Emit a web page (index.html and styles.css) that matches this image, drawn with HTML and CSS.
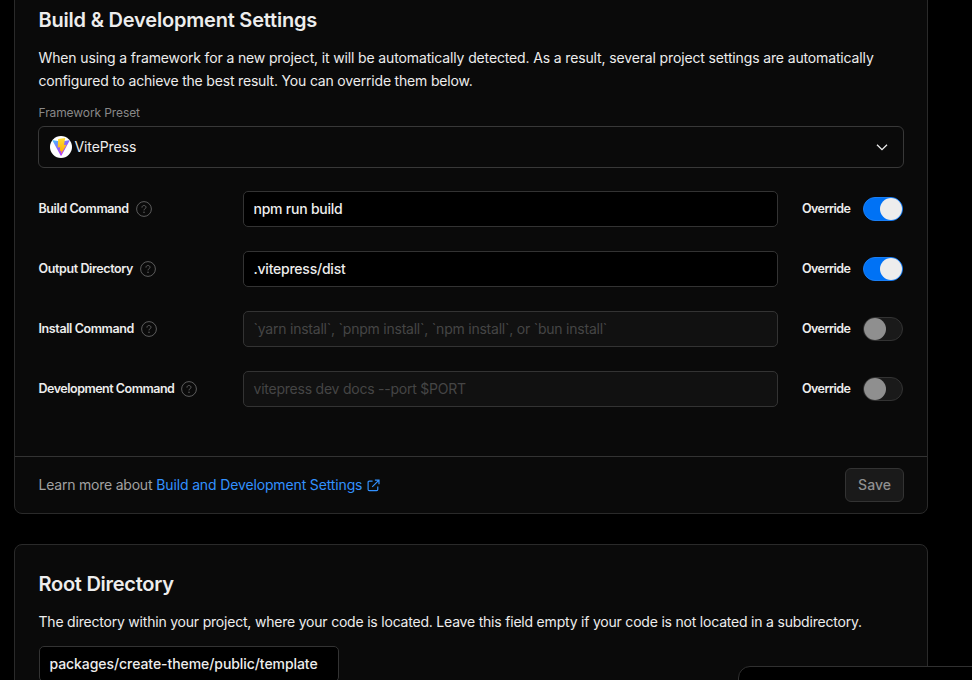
FILE: index.html
```html
<!DOCTYPE html>
<html lang="en">
<head>
<meta charset="utf-8">
<title>Project Settings</title>
<link rel="stylesheet" href="styles.css">
</head>
<body>
<svg class="defs" width="0" height="0" aria-hidden="true">
  <symbol id="help" viewBox="0 0 16 16">
    <circle cx="8" cy="8" r="7.4" fill="none" stroke="currentColor"/>
    <path d="M6 6.7V6.3C6 5.2 6.9 4.5 8 4.5s2 .8 2 1.8c0 .7-.4 1.1-1 1.5-.7.4-1 .8-1 1.4v.2" fill="none" stroke="currentColor"/>
    <circle cx="8" cy="11.3" r=".8" fill="currentColor"/>
  </symbol>
</svg>
<main class="page">
  <section class="card build">
    <div class="body">
      <h2 class="t-build">Build &amp; Development Settings</h2>
      <p class="desc"><span class="d1">When using a framework for a new project, it will be automatically detected. As a result, several project settings are automatically</span><br><span class="d2">configured to achieve the best result. You can override them below.</span></p>
      <div class="caption">Framework Preset</div>
      <div class="select">
        <svg class="logo" width="22" height="22" viewBox="0 0 22 22">
          <defs>
            <linearGradient id="v" x1="0" y1="0" x2=".6" y2="1"><stop offset="0" stop-color="#41c8ff"/><stop offset=".55" stop-color="#8d5cff"/><stop offset="1" stop-color="#bd34fe"/></linearGradient>
            <linearGradient id="b" x1="0" y1="0" x2="0" y2="1"><stop offset="0" stop-color="#ffdd35"/><stop offset="1" stop-color="#ffa800"/></linearGradient>
          </defs>
          <circle cx="11" cy="11" r="11" fill="#fff"/>
          <path d="M3.1 4.2 11 5.4l8-1.2q.8 0 .4.7L11.5 19.4q-.5.6-.9 0L2.7 4.9q-.4-.8.4-.7Z" fill="url(#v)"/>
          <path d="m15.2 2-7 1-.5 8.6 2.5-.4-.6 4 1.8-.5-.4 3.4 5.6-9.4-2.6.4 1.2-7.1Z" fill="url(#b)"/>
        </svg>
        <span class="preset">VitePress</span>
        <svg class="chevron" width="16" height="16" viewBox="0 0 16 16"><path d="m3 5.7 5 5 5-5" fill="none" stroke="#ededed" stroke-width="1.3"/></svg>
      </div>
      <div class="rows">
        <div class="row"><div class="label"><span class="l1">Build Command</span><svg class="help"><use href="#help"/></svg></div><div class="field"><span class="f1">npm run build</span></div><span class="override">Override</span><span class="switch on"></span></div>
        <div class="row"><div class="label"><span class="l2">Output Directory</span><svg class="help"><use href="#help"/></svg></div><div class="field"><span class="f2">.vitepress/dist</span></div><span class="override">Override</span><span class="switch on"></span></div>
        <div class="row"><div class="label"><span class="l3">Install Command</span><svg class="help"><use href="#help"/></svg></div><div class="field off"><span class="f3">`yarn install`, `pnpm install`, `npm install`, or `bun install`</span></div><span class="override">Override</span><span class="switch"></span></div>
        <div class="row"><div class="label"><span class="l4">Development Command</span><svg class="help"><use href="#help"/></svg></div><div class="field off"><span class="f4">vitepress dev docs --port $PORT</span></div><span class="override">Override</span><span class="switch"></span></div>
      </div>
    </div>
    <footer class="footer">
      <div class="learn"><span class="n1">Learn more about</span><a class="link"><span class="n2">Build and Development Settings</span><svg width="13" height="13" viewBox="0 0 14 14" fill="none" stroke="currentColor" stroke-width="1.3"><path d="M6 2.2H2.5Q1.2 2.2 1.2 3.5v7.8q0 1.3 1.3 1.3h7.8q1.3 0 1.3-1.3V8M8.5 1.2h4.4v4.4M12.6 1.5 5.6 8.5"/></svg></a></div>
      <button class="save"><span>Save</span></button>
    </footer>
  </section>
  <section class="card root">
    <h2 class="t-root">Root Directory</h2>
    <p class="desc"><span class="d3">The directory within your project, where your code is located. Leave this field empty if your code is not located in a subdirectory.</span></p>
    <div class="field path"><span class="f5">packages/create-theme/public/template</span></div>
  </section>
</main>
<div class="toast"></div>
</body>
</html>
```
FILE: styles.css
```css
* { box-sizing: border-box; }
html, body { margin: 0; height: 680px; overflow: hidden; background: #000; }
body { position: relative; color: #ededed; font: 14px/20px Inter, "Liberation Sans", sans-serif; }
h2, p { margin: 0; }
span { white-space: nowrap; }
.defs { display: block; }
.page { padding: 0 44px 0 14px; height: 680px; overflow: hidden; display: flex; flex-direction: column; gap: 30px; }
.card { flex: none; background: #0a0a0a; border: 1px solid #2a2a2a; border-radius: 8px; }
.build { margin-top: -20px; height: 534px; display: flex; flex-direction: column; }
.body { flex: 1; padding: 23px 23px 0; }
h2 { font-size: 20px; line-height: 32px; font-weight: 600; padding-left: 0.5px; }
.t-build { letter-spacing: -0.2px; }
.t-root { letter-spacing: -0.27px; }
.desc { line-height: 23px; margin-top: 10px; padding-left: 0.5px; }
.d1 { letter-spacing: -0.14px; }
.d2 { letter-spacing: -0.185px; }
.d3 { letter-spacing: -0.206px; }
.caption { font-size: 12px; line-height: 20px; color: #888; margin-top: 11px; padding-left: 0.5px; letter-spacing: -0.1px; }
.select { height: 42px; margin-top: 3px; border: 1px solid #383838; border-radius: 6px; display: flex; align-items: center; padding: 0 13px 0 11px; }
.preset { margin-left: 2.5px; letter-spacing: -0.1px; }
.chevron { margin-left: auto; }
.rows { margin-top: 23px; display: grid; gap: 24px; }
.row { height: 36px; display: flex; align-items: center; }
.label { width: 205px; padding-left: 0.5px; display: flex; align-items: center; gap: 7px; font-size: 12.5px; font-weight: 600; letter-spacing: -0.39px; }
.l4 { letter-spacing: -0.49px; }
.help { width: 16px; height: 16px; color: #5c5c5c; }
.field { width: 535px; height: 36px; border: 1px solid #333; border-radius: 5px; background: #000; padding: 0 9.5px; line-height: 34px; font-weight: 500; letter-spacing: -0.23px; }
.off { background: #111; color: #454545; font-weight: 400; }
.override { width: 49px; margin: 0 12px 0 24px; font-size: 12.5px; font-weight: 600; letter-spacing: -0.55px; }
.switch { width: 40px; height: 24px; border: 1px solid #333; border-radius: 12px; background: #1a1a1a; display: flex; align-items: center; }
.switch::after { content: ""; width: 22px; height: 22px; border-radius: 50%; background: #8f8f8f; }
.on { background: #0072f5; border-color: #1a7ff5; justify-content: flex-end; }
.on::after { background: #ededed; }
.footer { height: 57px; border-top: 1px solid #333; padding: 0 23px 0 23.5px; display: flex; align-items: center; justify-content: space-between; }
.learn { display: flex; align-items: center; gap: 4px; color: #a1a1a1; }
.n1 { letter-spacing: -0.22px; }
.n2 { letter-spacing: -0.14px; }
.link { display: flex; align-items: center; gap: 4.5px; color: #3291ff; }
.save { width: 59px; height: 34px; padding: 0; border: 1px solid #333; border-radius: 6px; background: #1a1a1a; color: #8f8f8f; font: 500 14px/20px Inter, sans-serif; }
.root { height: 200px; padding: 23px; }
.path { width: 300px; margin: 13px 0 0 1px; letter-spacing: -0.07px; }
.toast { position: absolute; left: 738px; top: 666px; width: 260px; height: 40px; border: 1px solid #303030; border-radius: 12px; background: #000; }
```
